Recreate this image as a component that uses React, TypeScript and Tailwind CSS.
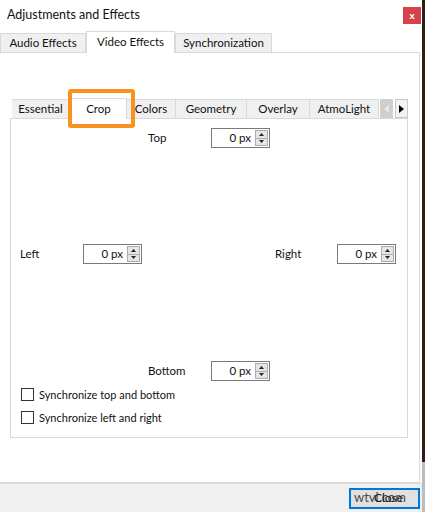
import React from "react";

const font = { fontFamily: 'Lato, "Noto Sans", sans-serif' };

const SpinBox = () => (
  <div className="w-[59px] h-[20px] border border-[#7a7a7a] bg-white flex items-center">
    <span className="flex-1 text-right pr-[4px] text-[11.5px] text-[#111] leading-none">0 px</span>
    <div className="w-[13px] h-[16px] mr-[1px] flex flex-col border border-[#adadad] bg-[#e5e5e5]">
      <div className="flex-1 flex items-center justify-center border-b border-[#adadad]">
        <svg width="5" height="3" viewBox="0 0 5 3">
          <path d="M2.5 0 L5 3 L0 3 Z" fill="#222" />
        </svg>
      </div>
      <div className="flex-1 flex items-center justify-center">
        <svg width="5" height="3" viewBox="0 0 5 3">
          <path d="M0 0 L5 0 L2.5 3 Z" fill="#222" />
        </svg>
      </div>
    </div>
  </div>
);

const CheckRow = ({ label }: { label: string }) => (
  <div className="flex items-center h-[13px]">
    <div className="w-[13px] h-[13px] border border-[#333] bg-white" />
    <span className="ml-[5px] text-[11px] text-[#111] leading-none">{label}</span>
  </div>
);

const outerTabs = [
  { name: "Audio Effects", w: "w-[86px]" },
  { name: "Video Effects", w: "w-[89px]", active: true },
  { name: "Synchronization", w: "w-[97px]" },
];

const innerTabs = [
  { name: "Essential", w: "w-[58px]" },
  { name: "Crop", w: "w-[57px]", active: true },
  { name: "Colors", w: "w-[49px]" },
  { name: "Geometry", w: "w-[71px]" },
  { name: "Overlay", w: "w-[63px]" },
  { name: "AtmoLight", w: "w-[69px]" },
];

const App = () => {
  return (
    <div className="w-[425px] h-[512px] bg-white flex overflow-hidden text-[#111]" style={font}>
      <div className="w-[422px] flex flex-col">
        {/* title bar */}
        <div className="h-[30px] flex items-center justify-between pl-[7px]">
          <span className="text-[12.5px]">Adjustments and Effects</span>
          <div className="w-[18px] h-[17px] bg-[#d7424a] flex items-center justify-center mr-[1px]">
            <span className="text-white text-[10px] font-bold leading-none">x</span>
          </div>
        </div>

        {/* outer tabs */}
        <div className="h-[22px] flex items-end">
          {outerTabs.map((t) =>
            t.active ? (
              <div
                key={t.name}
                className={`${t.w} h-[22px] bg-white border border-b-0 border-[#d9d9d9] flex items-center justify-center text-[11.5px] -mb-px relative z-10 pb-[2px]`}
              >
                {t.name}
              </div>
            ) : (
              <div
                key={t.name}
                className={`${t.w} h-[19px] bg-[#f0f0f0] border border-b-0 border-[#d9d9d9] flex items-center justify-center text-[11.5px]`}
              >
                {t.name}
              </div>
            ),
          )}
        </div>

        {/* outer pane */}
        <div className="w-[420px] h-[431px] border border-l-0 border-[#d9d9d9] pt-[45px] pl-[10px]">
          {/* inner tabs */}
          <div className="relative h-[20px] flex items-end pl-[2px]">
            {innerTabs.map((t) =>
              t.active ? (
                <div
                  key={t.name}
                  className={`${t.w} h-[21px] bg-white border border-b-0 border-[#d9d9d9] flex items-center justify-center text-[11.5px] -mb-px relative pb-[1px]`}
                >
                  {t.name}
                </div>
              ) : (
                <div
                  key={t.name}
                  className={`${t.w} h-[19px] bg-[#f0f0f0] border border-b-0 border-l-0 border-[#d9d9d9] flex items-center justify-center text-[11.5px]`}
                >
                  {t.name}
                </div>
              ),
            )}
            <div className="h-[19px] flex items-center gap-[2px] ml-[1px]">
              <div className="w-[13px] h-[19px] bg-[#cfcfcf] flex items-center justify-center">
                <svg width="5" height="8" viewBox="0 0 5 8">
                  <path d="M5 0 L0 4 L5 8 Z" fill="#eaeaea" />
                </svg>
              </div>
              <div className="w-[13px] h-[19px] bg-[#f3f3f3] border border-[#c8c8c8] flex items-center justify-center">
                <svg width="5" height="8" viewBox="0 0 5 8">
                  <path d="M0 0 L5 4 L0 8 Z" fill="#000" />
                </svg>
              </div>
            </div>
            {/* orange highlight around Crop */}
            <div className="absolute left-[58px] top-[-9px] w-[67px] h-[39px] border-[4px] border-[#f7931e] rounded-[3px] pointer-events-none" />
          </div>

          {/* inner pane */}
          <div className="w-[398px] h-[320px] border border-[#d9d9d9] bg-white flex flex-col text-[11.5px]">
            <div className="flex items-center mt-[9px] h-[20px] pl-[137px]">
              <span className="w-[63px]">Top</span>
              <SpinBox />
            </div>
            <div className="flex items-center mt-[96px] h-[20px] pl-[9px]">
              <span className="w-[63px]">Left</span>
              <SpinBox />
              <span className="ml-[133px] w-[62px]">Right</span>
              <SpinBox />
            </div>
            <div className="flex items-center mt-[97px] h-[20px] pl-[137px]">
              <span className="w-[63px]">Bottom</span>
              <SpinBox />
            </div>
            <div className="flex flex-col gap-[10px] mt-[7px] pl-[10px]">
              <CheckRow label="Synchronize top and bottom" />
              <CheckRow label="Synchronize left and right" />
            </div>
          </div>
        </div>

        {/* bottom bar */}
        <div className="flex-1 bg-[#f0f0f0] border-t border-[#dfdfdf] flex items-center justify-end pr-[2px]">
          <div className="relative w-[71px] h-[21px] border-2 border-[#0078d7] bg-[#e1e1e1] flex items-center justify-center">
            <span className="text-[12px] ml-[8px]">Close</span>
            <span className="absolute inset-0 flex items-center pl-[3px] text-[13px] text-[#222] opacity-80">
              wtvi.com
            </span>
          </div>
        </div>
      </div>
      <div className="w-[3px] flex flex-col">
        <div className="h-[462px] bg-[#2b1f18]" />
        <div className="flex-1 bg-[#bdbdbd]" />
      </div>
    </div>
  );
};

export default App;
